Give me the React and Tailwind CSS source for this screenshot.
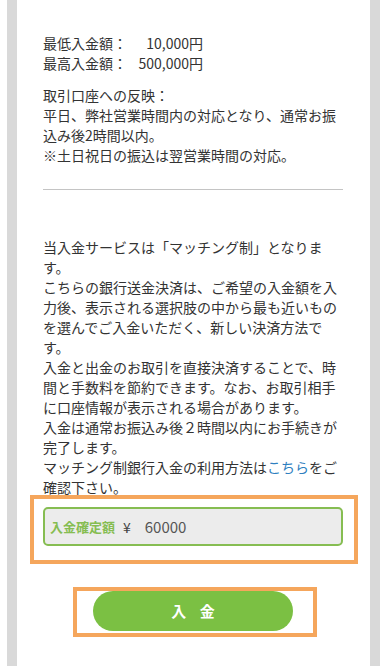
import React from "react";

export default function App() {
  const font = { fontFamily: '"Noto Sans CJK JP", "Noto Sans", sans-serif' };
  return (
    <div className="min-h-[666px] w-full bg-white px-[7px] flex" style={font}>
      <div className="flex-1 min-h-[666px] border-x-[10px] border-[#d9d9d9] bg-white pl-[26px] pr-[25px] pt-[33px] text-[14px] leading-[20px] text-[#333333]">
        <div className="w-[300px]">
          <div>
            <div className="flex">
              <span>最低入金額：</span>
              <span className="w-[76px] text-right">10,000円</span>
            </div>
            <div className="flex">
              <span>最高入金額：</span>
              <span className="w-[76px] text-right">500,000円</span>
            </div>
          </div>
          <p className="mt-[12px]">
            取引口座への反映：
            <br />
            平日、弊社営業時間内の対応となり、通常お振
            <br />
            込み後2時間以内。
            <br />
            ※土日祝日の振込は翌営業時間の対応。
          </p>
          <div className="mt-[24px] h-px bg-[#c4c4c4]" />
          <p className="mt-[47px]">
            当入金サービスは「マッチング制」となりま
            <br />
            す。
            <br />
            こちらの銀行送金決済は、ご希望の入金額を入
            <br />
            力後、表示される選択肢の中から最も近いもの
            <br />
            を選んでご入金いただく、新しい決済方法で
            <br />
            す。
            <br />
            入金と出金のお取引を直接決済することで、時
            <br />
            間と手数料を節約できます。なお、お取引相手
            <br />
            に口座情報が表示される場合があります。
            <br />
            入金は通常お振込み後２時間以内にお手続きが
            <br />
            完了します。
            <br />
            マッチング制銀行入金の利用方法は
            <span className="text-[#2f7fc0]">こちら</span>
            をご
            <br />
            確認下さい。
          </p>

          <div className="relative mt-[10px]">
            <div className="pointer-events-none absolute -left-[13px] -right-[15px] -top-[12px] -bottom-[18px] border-[4px] border-[#f5a65c]" />
            <div className="flex h-[39px] items-center rounded-[5px] border-2 border-[#86bd52] bg-[#ececec] pl-[5px]">
              <span className="text-[13px] font-bold text-[#86bd52]">入金確定額</span>
              <span className="ml-[8px] text-[14px] text-[#444444]">¥</span>
              <span className="ml-[14px] text-[15px] text-[#555555]">60000</span>
            </div>
          </div>

          <div className="mt-[45px] flex justify-center">
            <div className="relative">
              <div className="pointer-events-none absolute -left-[20px] -right-[24px] -top-[4px] -bottom-[6px] border-[4px] border-[#f5a65c]" />
              <button className="flex h-[40px] w-[200px] items-center justify-center rounded-full bg-[#7bc043] text-[15px] font-bold text-white tracking-[0.9em] pl-[0.9em]">
                入金
              </button>
            </div>
          </div>
        </div>
      </div>
    </div>
  );
}
